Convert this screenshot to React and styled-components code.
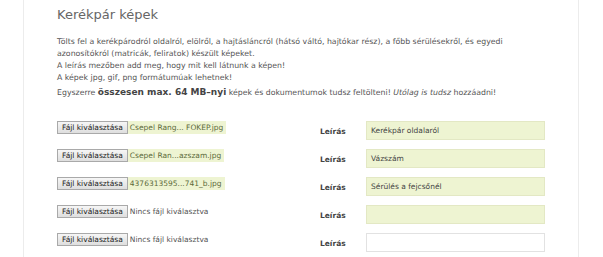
import React from 'react';
import styled, { createGlobalStyle } from 'styled-components';

const GlobalStyle = createGlobalStyle`
    body {
        margin: 0;
        background: #ffffff;
        font-family: "DejaVu Sans", Verdana, sans-serif;
    }
`

const Page = styled.div`
    width: 603px;
    height: 257px;
    overflow: hidden;
    padding-left: 23px;
    box-sizing: border-box;
`

const Panel = styled.div`
    width: 556px;
    height: 257px;
    border-left: 1px solid #ececec;
    border-right: 1px solid #ececec;
    box-sizing: border-box;
    padding: 5px 0 0 33px;
`

const Title = styled.h2`
    margin: 0;
    font-size: 13px;
    font-weight: normal;
    color: #666666;
    line-height: 20px;
`

const Intro = styled.div`
    margin-top: 11px;
    max-width: 460px;
    font-size: 7.8px;
    line-height: 12px;
    color: #555555;
    > p {
        margin: 0;
    }
`

const LastLine = styled.p`
    line-height: 17px;
`

const Big = styled.b`
    font-size: 9px;
    color: #444444;
`

const Rows = styled.div`
    margin-top: 20px;
    display: flex;
    flex-direction: column;
    gap: 9px;
`

const Row = styled.div`
    display: grid;
    grid-template-columns: 263px 46px 179px;
    align-items: center;
    height: 19px;
`

const FileCell = styled.div`
    display: flex;
    align-items: center;
    align-self: start;
`

const FileButton = styled.span`
    display: inline-block;
    height: 13px;
    line-height: 12px;
    padding: 0 4px;
    box-sizing: border-box;
    border: 1px solid #a9a9a9;
    background: linear-gradient(#f6f6f6, #dedede);
    font-size: 7.5px;
    color: #222222;
`

const FileName = styled.span`
    height: 13px;
    line-height: 13px;
    padding: 0 3px 0 2px;
    font-size: 7.5px;
    color: ${p => (p.$chosen ? '#5c6a3a' : '#555555')};
    background: ${p => (p.$chosen ? '#eef4d2' : 'transparent')};
`

const Label = styled.span`
    font-size: 7.5px;
    font-weight: bold;
    color: #444444;
    padding-top: 2px;
`

const TextBox = styled.div`
    height: 19px;
    box-sizing: border-box;
    border: 1px solid ${p => (p.$filled ? '#e3e8c4' : '#e2e2e2')};
    background: ${p => (p.$filled ? '#eef4d2' : '#ffffff')};
    padding-left: 4px;
    font-size: 7.5px;
    line-height: 17px;
    color: #444444;
`

const rows = [
    { file: 'Csepel Rang... FOKEP.jpg', desc: 'Kerékpár oldalaról', filled: true },
    { file: 'Csepel Ran...azszam.jpg', desc: 'Vázszám', filled: true },
    { file: '4376313595...741_b.jpg', desc: 'Sérülés a fejcsőnél', filled: true },
    { file: null, desc: '', filled: true },
    { file: null, desc: '', filled: false },
]

export default function App() {
    return (
        <Page>
            <GlobalStyle />
            <Panel>
                <Title>Kerékpár képek</Title>
                <Intro>
                    <p>Tölts fel a kerékpárodról oldalról, elölről, a hajtásláncról (hátsó váltó, hajtókar rész), a főbb sérülésekről, és egyedi azonosítókról (matricák, feliratok) készült képeket.</p>
                    <p>A leírás mezőben add meg, hogy mit kell látnunk a képen!</p>
                    <p>A képek jpg, gif, png formátumúak lehetnek!</p>
                    <LastLine>Egyszerre <Big>összesen max. 64 MB–nyi</Big> képek és dokumentumok tudsz feltölteni! <i>Utólag is tudsz</i> hozzáadni!</LastLine>
                </Intro>
                <Rows>
                    {rows.map((r, i) => (
                        <Row key={i}>
                            <FileCell>
                                <FileButton>Fájl kiválasztása</FileButton>
                                <FileName $chosen={!!r.file}>{r.file || 'Nincs fájl kiválasztva'}</FileName>
                            </FileCell>
                            <Label>Leírás</Label>
                            <TextBox $filled={r.filled}>{r.desc}</TextBox>
                        </Row>
                    ))}
                </Rows>
            </Panel>
        </Page>
    );
}
